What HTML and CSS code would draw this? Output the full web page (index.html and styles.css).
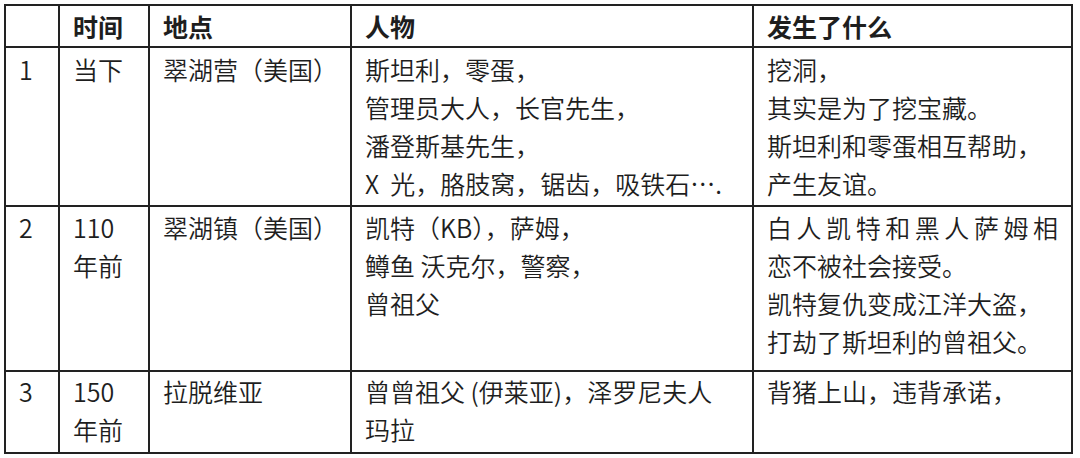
FILE: index.html
```html
<!DOCTYPE html>
<html lang="zh-CN">
<head>
<meta charset="utf-8">
<link rel="stylesheet" href="styles.css">
</head>
<body>
<table class="grid">
  <colgroup>
    <col class="c-no">
    <col class="c-time">
    <col class="c-place">
    <col class="c-people">
    <col class="c-what">
  </colgroup>
  <thead>
    <tr class="head">
      <th></th>
      <th>时间</th>
      <th>地点</th>
      <th>人物</th>
      <th>发生了什么</th>
    </tr>
  </thead>
  <tbody>
    <tr class="row-a">
      <td>1</td>
      <td>当下</td>
      <td>翠湖营（美国）</td>
      <td>
        <div>斯坦利，零蛋，</div>
        <div>管理员大人，长官先生，</div>
        <div>潘登斯基先生，</div>
        <div>X&nbsp; 光，胳肢窝，锯齿，吸铁石….</div>
      </td>
      <td>
        <div>挖洞，</div>
        <div>其实是为了挖宝藏。</div>
        <div>斯坦利和零蛋相互帮助，</div>
        <div>产生友谊。</div>
      </td>
    </tr>
    <tr class="row-b">
      <td>2</td>
      <td><div>110</div><div>年前</div></td>
      <td>翠湖镇（美国）</td>
      <td>
        <div>凯特（KB），萨姆，</div>
        <div>鳟鱼 沃克尔，警察，</div>
        <div>曾祖父</div>
      </td>
      <td>
        <div class="just">白人凯特和黑人萨姆相</div>
        <div>恋不被社会接受。</div>
        <div>凯特复仇变成江洋大盗，</div>
        <div>打劫了斯坦利的曾祖父。</div>
      </td>
    </tr>
    <tr class="row-c">
      <td>3</td>
      <td><div>150</div><div>年前</div></td>
      <td>拉脱维亚</td>
      <td>
        <div>曾曾祖父 (伊莱亚)，泽罗尼夫人</div>
        <div>玛拉</div>
      </td>
      <td>
        <div>背猪上山，违背承诺，</div>
      </td>
    </tr>
  </tbody>
</table>
</body>
</html>
```

FILE: styles.css
```css
html, body {
  margin: 0;
  padding: 0;
  background: #ffffff;
}

body {
  font-family: "Noto Sans CJK SC", "Noto Sans", sans-serif;
  font-size: 25px;
  font-weight: 350;
  color: #1e1e1e;
}

.grid {
  margin: 4px 0 0 4px;
  border-collapse: collapse;
  table-layout: fixed;
  width: 1067px;
}

.c-no { width: 54px; }
.c-time { width: 90px; }
.c-place { width: 202px; }
.c-people { width: 402px; }
.c-what { width: 319px; }

.grid th,
.grid td {
  border: 2px solid #222222;
  vertical-align: top;
  text-align: left;
  line-height: 38px;
  padding: 0 13px;
  white-space: nowrap;
}

.grid th {
  font-weight: 700;
  padding-top: 1px;
  padding-bottom: 1px;
}

.row-a td {
  padding-top: 2px;
  padding-bottom: 3px;
}

.row-b td {
  padding-top: 1px;
  padding-bottom: 10px;
}

.row-c td {
  padding-top: 0;
  padding-bottom: 4px;
}

.just {
  text-align: justify;
  text-align-last: justify;
}
```
